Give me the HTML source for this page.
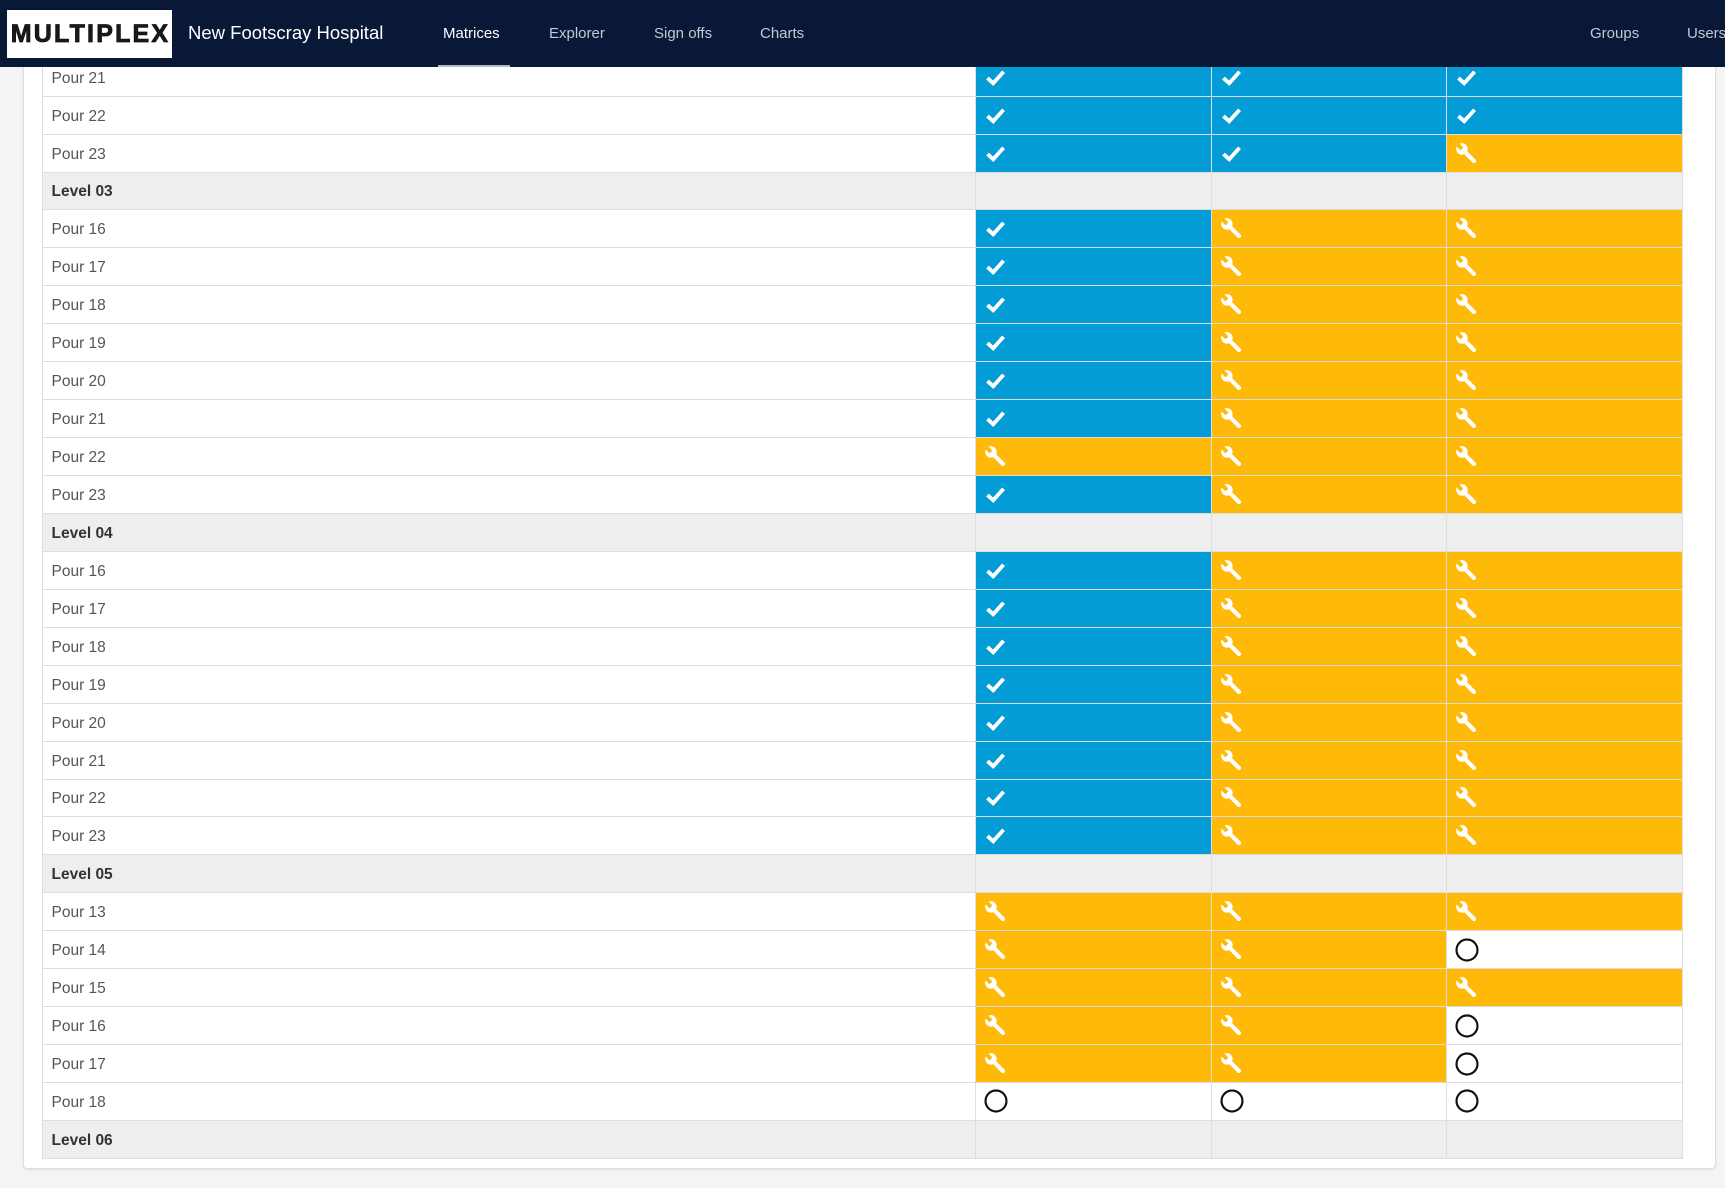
<!DOCTYPE html>
<html><head><meta charset="utf-8">
<style>
*{margin:0;padding:0;box-sizing:border-box}
html,body{width:1725px;height:1188px;overflow:hidden;background:#f4f4f4;font-family:"Liberation Sans",sans-serif}
.card{position:absolute;left:23px;top:30px;width:1693px;height:1139px;background:#fff;border:1px solid #ddd;border-radius:4px;box-shadow:0 1px 2px rgba(0,0,0,.08)}
table{position:absolute;left:41.5px;top:57.7px;border-collapse:collapse;table-layout:fixed;width:1641px}
td{height:37.94px;border:1px solid #ddd;padding:0;vertical-align:middle}
td.n{width:933.5px;padding-left:9px;padding-top:3px;font-size:15.5px;color:#555}
td.c{width:235.7px;padding-left:8px;line-height:0}
tr.g td{background:#eee}
tr.g td.n{font-weight:bold;color:#333}
td.b{background:#039cd6}
td.o{background:#ffb908;color:#ffb908}
.nav{position:absolute;left:0;top:0;width:1725px;height:67px;background:#0a1838}
.logo{position:absolute;left:7px;top:10px;width:165px;height:48px;background:#fff;font-weight:bold;font-size:25px;color:#1a1a1a;line-height:48px;text-align:center;letter-spacing:2.2px;-webkit-text-stroke:0.8px #111;text-indent:2px}
.nav span{position:absolute;top:25px;font-size:15px;color:#c2c8d4}
.title{position:absolute;left:188px;top:22px;font-size:18.5px;color:#fff}
.ul{position:absolute;left:438px;top:65px;width:72px;height:2px;background:#b4bac4}
</style></head><body>
<svg width="0" height="0" style="position:absolute">
<defs>
<symbol id="k" viewBox="0 0 20 20"><polyline points="3,10.5 8,15 17,5" fill="none" stroke="#fff" stroke-width="3.4"/></symbol>
<symbol id="r" viewBox="0 0 20 20"><line x1="7" y1="7" x2="16.5" y2="16.5" stroke="#fff" stroke-width="3.6" stroke-linecap="round"/><circle cx="6" cy="6" r="5" fill="#fff"/><polygon points="1,3.5 3.5,1 7.3,4.8 4.8,7.3" fill="currentColor"/></symbol>
<symbol id="w" viewBox="0 0 22 22"><circle cx="11" cy="11" r="9.6" fill="none" stroke="#111" stroke-width="2"/></symbol>
</defs></svg>
<div class="card"></div>
<table>
<tr><td class="n">Pour 21</td><td class="c b"><svg width="23" height="23"><use href="#k"/></svg></td><td class="c b"><svg width="23" height="23"><use href="#k"/></svg></td><td class="c b"><svg width="23" height="23"><use href="#k"/></svg></td></tr>
<tr><td class="n">Pour 22</td><td class="c b"><svg width="23" height="23"><use href="#k"/></svg></td><td class="c b"><svg width="23" height="23"><use href="#k"/></svg></td><td class="c b"><svg width="23" height="23"><use href="#k"/></svg></td></tr>
<tr><td class="n">Pour 23</td><td class="c b"><svg width="23" height="23"><use href="#k"/></svg></td><td class="c b"><svg width="23" height="23"><use href="#k"/></svg></td><td class="c o"><svg width="23" height="23"><use href="#r"/></svg></td></tr>
<tr class="g"><td class="n">Level 03</td><td class="c"></td><td class="c"></td><td class="c"></td></tr>
<tr><td class="n">Pour 16</td><td class="c b"><svg width="23" height="23"><use href="#k"/></svg></td><td class="c o"><svg width="23" height="23"><use href="#r"/></svg></td><td class="c o"><svg width="23" height="23"><use href="#r"/></svg></td></tr>
<tr><td class="n">Pour 17</td><td class="c b"><svg width="23" height="23"><use href="#k"/></svg></td><td class="c o"><svg width="23" height="23"><use href="#r"/></svg></td><td class="c o"><svg width="23" height="23"><use href="#r"/></svg></td></tr>
<tr><td class="n">Pour 18</td><td class="c b"><svg width="23" height="23"><use href="#k"/></svg></td><td class="c o"><svg width="23" height="23"><use href="#r"/></svg></td><td class="c o"><svg width="23" height="23"><use href="#r"/></svg></td></tr>
<tr><td class="n">Pour 19</td><td class="c b"><svg width="23" height="23"><use href="#k"/></svg></td><td class="c o"><svg width="23" height="23"><use href="#r"/></svg></td><td class="c o"><svg width="23" height="23"><use href="#r"/></svg></td></tr>
<tr><td class="n">Pour 20</td><td class="c b"><svg width="23" height="23"><use href="#k"/></svg></td><td class="c o"><svg width="23" height="23"><use href="#r"/></svg></td><td class="c o"><svg width="23" height="23"><use href="#r"/></svg></td></tr>
<tr><td class="n">Pour 21</td><td class="c b"><svg width="23" height="23"><use href="#k"/></svg></td><td class="c o"><svg width="23" height="23"><use href="#r"/></svg></td><td class="c o"><svg width="23" height="23"><use href="#r"/></svg></td></tr>
<tr><td class="n">Pour 22</td><td class="c o"><svg width="23" height="23"><use href="#r"/></svg></td><td class="c o"><svg width="23" height="23"><use href="#r"/></svg></td><td class="c o"><svg width="23" height="23"><use href="#r"/></svg></td></tr>
<tr><td class="n">Pour 23</td><td class="c b"><svg width="23" height="23"><use href="#k"/></svg></td><td class="c o"><svg width="23" height="23"><use href="#r"/></svg></td><td class="c o"><svg width="23" height="23"><use href="#r"/></svg></td></tr>
<tr class="g"><td class="n">Level 04</td><td class="c"></td><td class="c"></td><td class="c"></td></tr>
<tr><td class="n">Pour 16</td><td class="c b"><svg width="23" height="23"><use href="#k"/></svg></td><td class="c o"><svg width="23" height="23"><use href="#r"/></svg></td><td class="c o"><svg width="23" height="23"><use href="#r"/></svg></td></tr>
<tr><td class="n">Pour 17</td><td class="c b"><svg width="23" height="23"><use href="#k"/></svg></td><td class="c o"><svg width="23" height="23"><use href="#r"/></svg></td><td class="c o"><svg width="23" height="23"><use href="#r"/></svg></td></tr>
<tr><td class="n">Pour 18</td><td class="c b"><svg width="23" height="23"><use href="#k"/></svg></td><td class="c o"><svg width="23" height="23"><use href="#r"/></svg></td><td class="c o"><svg width="23" height="23"><use href="#r"/></svg></td></tr>
<tr><td class="n">Pour 19</td><td class="c b"><svg width="23" height="23"><use href="#k"/></svg></td><td class="c o"><svg width="23" height="23"><use href="#r"/></svg></td><td class="c o"><svg width="23" height="23"><use href="#r"/></svg></td></tr>
<tr><td class="n">Pour 20</td><td class="c b"><svg width="23" height="23"><use href="#k"/></svg></td><td class="c o"><svg width="23" height="23"><use href="#r"/></svg></td><td class="c o"><svg width="23" height="23"><use href="#r"/></svg></td></tr>
<tr><td class="n">Pour 21</td><td class="c b"><svg width="23" height="23"><use href="#k"/></svg></td><td class="c o"><svg width="23" height="23"><use href="#r"/></svg></td><td class="c o"><svg width="23" height="23"><use href="#r"/></svg></td></tr>
<tr><td class="n">Pour 22</td><td class="c b"><svg width="23" height="23"><use href="#k"/></svg></td><td class="c o"><svg width="23" height="23"><use href="#r"/></svg></td><td class="c o"><svg width="23" height="23"><use href="#r"/></svg></td></tr>
<tr><td class="n">Pour 23</td><td class="c b"><svg width="23" height="23"><use href="#k"/></svg></td><td class="c o"><svg width="23" height="23"><use href="#r"/></svg></td><td class="c o"><svg width="23" height="23"><use href="#r"/></svg></td></tr>
<tr class="g"><td class="n">Level 05</td><td class="c"></td><td class="c"></td><td class="c"></td></tr>
<tr><td class="n">Pour 13</td><td class="c o"><svg width="23" height="23"><use href="#r"/></svg></td><td class="c o"><svg width="23" height="23"><use href="#r"/></svg></td><td class="c o"><svg width="23" height="23"><use href="#r"/></svg></td></tr>
<tr><td class="n">Pour 14</td><td class="c o"><svg width="23" height="23"><use href="#r"/></svg></td><td class="c o"><svg width="23" height="23"><use href="#r"/></svg></td><td class="c"><svg width="24" height="24"><use href="#w"/></svg></td></tr>
<tr><td class="n">Pour 15</td><td class="c o"><svg width="23" height="23"><use href="#r"/></svg></td><td class="c o"><svg width="23" height="23"><use href="#r"/></svg></td><td class="c o"><svg width="23" height="23"><use href="#r"/></svg></td></tr>
<tr><td class="n">Pour 16</td><td class="c o"><svg width="23" height="23"><use href="#r"/></svg></td><td class="c o"><svg width="23" height="23"><use href="#r"/></svg></td><td class="c"><svg width="24" height="24"><use href="#w"/></svg></td></tr>
<tr><td class="n">Pour 17</td><td class="c o"><svg width="23" height="23"><use href="#r"/></svg></td><td class="c o"><svg width="23" height="23"><use href="#r"/></svg></td><td class="c"><svg width="24" height="24"><use href="#w"/></svg></td></tr>
<tr><td class="n">Pour 18</td><td class="c"><svg width="24" height="24"><use href="#w"/></svg></td><td class="c"><svg width="24" height="24"><use href="#w"/></svg></td><td class="c"><svg width="24" height="24"><use href="#w"/></svg></td></tr>
<tr class="g"><td class="n">Level 06</td><td class="c"></td><td class="c"></td><td class="c"></td></tr>
</table>
<div class="nav">
<div class="logo">MULTIPLEX</div>
<div class="title">New Footscray Hospital</div>
<span style="left:443px;color:#fff">Matrices</span>
<span style="left:549px">Explorer</span>
<span style="left:654px">Sign offs</span>
<span style="left:760px">Charts</span>
<span style="left:1590px">Groups</span>
<span style="left:1687px">Users</span>
<div class="ul"></div>
</div>
</body></html>
